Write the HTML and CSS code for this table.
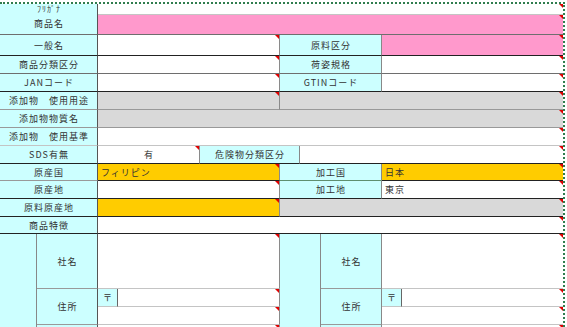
FILE: index.html
```html
<!DOCTYPE html>
<html lang="ja">
<head>
<meta charset="utf-8">
<title>商品規格書</title>
<link rel="stylesheet" href="styles.css">
</head>
<body>
<div class="page">
  <div class="sheet">
    <!-- row 1-2 -->
    <div class="c lab name b-md" style="grid-column:1/3;grid-row:1/3"><span class="kana">ﾌﾘｶﾞﾅ</span><span class="nm">商品名</span></div>
    <div class="c w end b-lt cm" style="grid-column:3/11;grid-row:1"></div>
    <div class="c pk end b-md cm" style="grid-column:3/11;grid-row:2"></div>

    <!-- row 3 -->
    <div class="c lab b-dk" style="grid-column:1/3">一般名</div>
    <div class="c w b-dk cm" style="grid-column:3/6"></div>
    <div class="c lab2 b-dk" style="grid-column:6/9">原料区分</div>
    <div class="c pk end b-dk cm" style="grid-column:9/11"></div>

    <!-- row 4 -->
    <div class="c lab b-md" style="grid-column:1/3">商品分類区分</div>
    <div class="c w b-md cm" style="grid-column:3/6"></div>
    <div class="c lab2 b-md" style="grid-column:6/9">荷姿規格</div>
    <div class="c w end b-md cm" style="grid-column:9/11"></div>

    <!-- row 5 -->
    <div class="c lab b-dk" style="grid-column:1/3">JANコード</div>
    <div class="c w b-dk cm" style="grid-column:3/6"></div>
    <div class="c lab2 b-dk" style="grid-column:6/9">GTINコード</div>
    <div class="c w end b-dk cm" style="grid-column:9/11"></div>

    <!-- row 6 -->
    <div class="c lab b-gr" style="grid-column:1/3">添加物　使用用途</div>
    <div class="c gy b-gr cm" style="grid-column:3/6"></div>
    <div class="c gy end b-gr cm" style="grid-column:6/11"></div>

    <!-- row 7 -->
    <div class="c lab b-gr" style="grid-column:1/3">添加物物質名</div>
    <div class="c gy end b-gr cm" style="grid-column:3/11"></div>

    <!-- row 8 -->
    <div class="c lab b-lt" style="grid-column:1/3">添加物　使用基準</div>
    <div class="c w end b-lt cm" style="grid-column:3/11"></div>

    <!-- row 9 -->
    <div class="c lab b-dk" style="grid-column:1/3">SDS有無</div>
    <div class="c w ctr b-dk cm" style="grid-column:3/5">有</div>
    <div class="c lab2 b-dk" style="grid-column:5/7">危険物分類区分</div>
    <div class="c w end b-dk cm" style="grid-column:7/11"></div>

    <!-- row 10 -->
    <div class="c lab b-gr" style="grid-column:1/3">原産国</div>
    <div class="c or v b-dk cm" style="grid-column:3/6">フィリピン</div>
    <div class="c lab2 b-gn" style="grid-column:6/9">加工国</div>
    <div class="c or v end b-dk cm" style="grid-column:9/11">日本</div>

    <!-- row 11 -->
    <div class="c lab b-dk" style="grid-column:1/3">原産地</div>
    <div class="c w b-dk cm" style="grid-column:3/6"></div>
    <div class="c lab2 b-dk" style="grid-column:6/9">加工地</div>
    <div class="c w v end b-dk cm" style="grid-column:9/11">東京</div>

    <!-- row 12 -->
    <div class="c lab b-dk" style="grid-column:1/3">原料原産地</div>
    <div class="c or b-dk cm" style="grid-column:3/6"></div>
    <div class="c gy end b-dk cm" style="grid-column:6/11"></div>

    <!-- row 13 -->
    <div class="c lab b-dk" style="grid-column:1/3">商品特徴</div>
    <div class="c w end b-dk cm" style="grid-column:3/11"></div>

    <!-- row 14+ : company blocks -->
    <div class="c outer" style="grid-column:1/2;grid-row:14/18"></div>
    <div class="c lab b-gr" style="grid-column:2/3;grid-row:14">社名</div>
    <div class="c w b-lt cm" style="grid-column:3/6;grid-row:14"></div>
    <div class="c outer" style="grid-column:6/8;grid-row:14/18"></div>
    <div class="c lab2 b-gr" style="grid-column:8/9;grid-row:14">社名</div>
    <div class="c w end b-lt cm" style="grid-column:9/11;grid-row:14"></div>

    <div class="c lab b-gr" style="grid-column:2/3;grid-row:15/17">住所</div>
    <div class="c zip b-lt" style="grid-column:3/4;grid-row:15">〒</div>
    <div class="c w b-lt cm" style="grid-column:4/6;grid-row:15"></div>
    <div class="c lab2 b-gr" style="grid-column:8/9;grid-row:15/17">住所</div>
    <div class="c zip b-lt" style="grid-column:9/10;grid-row:15">〒</div>
    <div class="c w end b-lt cm" style="grid-column:10/11;grid-row:15"></div>

    <div class="c w b-lt cm" style="grid-column:3/6;grid-row:16"></div>
    <div class="c w end b-lt cm" style="grid-column:9/11;grid-row:16"></div>

    <div class="c lab b-gr" style="grid-column:2/3;grid-row:17"></div>
    <div class="c w b-lt cm" style="grid-column:3/6;grid-row:17"></div>
    <div class="c lab2 b-gr" style="grid-column:8/9;grid-row:17"></div>
    <div class="c w end b-lt cm" style="grid-column:9/11;grid-row:17"></div>
  </div>
</div>
</body>
</html>
```
FILE: styles.css
```css
html, body {
  margin: 0;
  padding: 0;
  background: #fff;
}
body {
  width: 567px;
  height: 327px;
  overflow: hidden;
  font-family: "Noto Sans CJK JP", "Noto Sans", sans-serif;
}
.page {
  padding-top: 2px;
}
.sheet {
  box-sizing: border-box;
  width: 565px;
  display: grid;
  grid-template-columns: 37px 61px 20px 82px 80px 20px 21px 61px 20px 161px;
  grid-template-rows: 11px 20px 21px 18px 18px 18px 18px 18px 18px 17px 18px 18px 17px 55px 18px 18px 18px;
  border-top: 2px dotted #2f7d4e;
  border-right: 2px dotted #2f7d4e;
}
.c {
  box-sizing: border-box;
  position: relative;
  display: flex;
  align-items: center;
  border-right: 1px solid #8a8a8a;
  border-bottom: 1px solid #aaa;
  font-size: 9px;
  line-height: 1;
  color: #333;
  white-space: nowrap;
}
.lab {
  background: #ccffff;
  justify-content: center;
  letter-spacing: 1px;
  padding-left: 1px;
  border-right-color: #555;
}
.lab2 {
  background: #ccffff;
  justify-content: center;
  letter-spacing: 1px;
  padding-left: 1px;
  border-right-color: #888;
}
.name {
  flex-direction: column;
  justify-content: flex-start;
}
.kana {
  font-size: 8px;
  letter-spacing: 1px;
  margin-top: 1px;
}
.nm {
  margin-top: 6px;
}
.outer {
  background: #ccffff;
  border-bottom: 0;
  border-right-color: #888;
}
.zip {
  background: #ccffff;
  justify-content: center;
  border-right-color: #666;
}
.w { background: #fff; }
.pk { background: #ff99cc; }
.or { background: #ffcc00; }
.gy { background: #d9d9d9; }
.ctr {
  justify-content: center;
}
.v {
  padding-left: 3px;
  letter-spacing: 1px;
}
.end {
  border-right: 0;
}
.b-dk { border-bottom-color: #222; }
.b-md { border-bottom-color: #6e6e6e; }
.b-gr { border-bottom-color: #999; }
.b-lt { border-bottom-color: #c4c4c4; }
.b-gn { border-bottom-color: #5f8f6f; }
.cm::after {
  content: "";
  position: absolute;
  top: 0;
  right: 0;
  border-top: 4px solid #e00000;
  border-left: 4px solid transparent;
}
```
